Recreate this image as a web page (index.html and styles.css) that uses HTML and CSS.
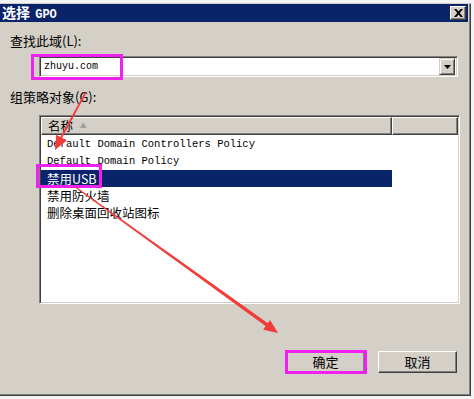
FILE: index.html
```html
<!DOCTYPE html>
<html lang="zh-CN">
<head>
    <meta charset="UTF-8">
    <title>选择 GPO</title>
    <link rel="stylesheet" href="styles.css">
</head>
<body>
    <div class="screen">
        <div class="window">
            <div class="titlebar">
                <span class="title">选择 <span class="title-latin">GPO</span></span>
                <button class="close">
                    <svg width="9" height="8" viewBox="0 0 9 8">
                        <path d="M0 0h2.4l2.1 2.5L6.6 0H9L5.7 4 9 8H6.6L4.5 5.5 2.4 8H0l3.3-4z" fill="#000"/>
                    </svg>
                </button>
            </div>

            <div class="body">
                <div class="label">查找此域(L):</div>
                <div class="combo">
                    <div class="combo-text">zhuyu.com</div>
                    <div class="combo-btn">
                        <svg width="7" height="4" viewBox="0 0 7 4"><path d="M0 0h7L3.5 4z" fill="#000"/></svg>
                    </div>
                </div>

                <div class="label label-gpo">组策略对象(G):</div>
                <div class="listview">
                    <div class="lv-header">
                        <div class="col col-name">名称 <span class="sort">▲</span></div>
                        <div class="col col-extra"></div>
                    </div>
                    <div class="lv-rows">
                        <div class="row latin">Default Domain Controllers Policy</div>
                        <div class="row latin">Default Domain Policy</div>
                        <div class="row selected">禁用USB</div>
                        <div class="row">禁用防火墙</div>
                        <div class="row">删除桌面回收站图标</div>
                    </div>
                </div>

                <div class="buttons">
                    <button class="btn">确定</button>
                    <button class="btn">取消</button>
                </div>
            </div>
        </div>

        <!-- annotations drawn on top of the screenshot -->
        <div class="mark mark-domain"></div>
        <div class="mark mark-usb"></div>
        <div class="mark mark-ok"></div>
        <svg class="arrows" width="474" height="399" viewBox="0 0 474 399">
            <polygon points="85,92 86.5,93 61.8,138.5 60,137.5" fill="#f33b3b"/>
            <polygon points="55,150 56.2,134.8 66.8,140.4" fill="#f33b3b"/>
            <polygon points="75,187.5 75.6,186.6 268.2,323.6 266.2,326.4" fill="#f33b3b"/>
            <polygon points="278,333 263.1,329.8 270.1,320" fill="#f33b3b"/>
        </svg>
    </div>
</body>
</html>
```

FILE: styles.css
```css
:root{
    --face:#d4d0c8;
    --navy:#0a246a;
    --shadow:#808080;
    --dark:#404040;
    --mark:#f020f0;
}

*{
    box-sizing: border-box;
    margin: 0;
}

body{
    background: #f4f4f4;
    font-family: "Noto Sans CJK SC", "Liberation Sans", sans-serif;
    font-size: 12px;
    color: #000;
}

.screen{
    position: relative;
    width: 474px;
    height: 399px;
    overflow: hidden;
}

.window{
    margin-top: 3px;
    width: 471px;
    height: 393px;
    background: var(--face);
    border-top: 1px solid var(--face);
    border-right: 1px solid var(--dark);
    border-bottom: 1px solid var(--dark);
    box-shadow: inset -1px -1px 0 var(--shadow);
}

.titlebar{
    height: 18px;
    margin-right: 2px;
    background: var(--navy);
    display: flex;
    align-items: center;
    justify-content: space-between;
    padding: 0 2px;
}
.title{
    color: #fff;
    font-weight: 700;
    font-size: 14px;
    line-height: 18px;
}
.title-latin{
    font-family: "Liberation Mono", monospace;
    font-size: 12px;
    margin-left: 2px;
}

button{
    appearance: none;
    outline: none;
    padding: 0;
    font-family: inherit;
    background: var(--face);
    border: 1px solid;
    border-color: #fff var(--dark) var(--dark) #fff;
    box-shadow: inset -1px -1px 0 var(--shadow);
}
.close{
    width: 16px;
    height: 14px;
    display: flex;
    align-items: center;
    justify-content: center;
}

.body{
    padding: 12px 12px 0 10px;
}

.label{
    font-size: 13px;
    line-height: 14px;
    height: 14px;
}
.label-gpo{
    margin-top: 13px;
}

.combo{
    margin: 8px 0 0 29px;
    width: 419px;
    height: 21px;
    display: flex;
    background: #fff;
    border: 1px solid;
    border-color: var(--shadow) #fff #fff var(--shadow);
    box-shadow: inset 1px 1px 0 var(--dark), inset -1px -1px 0 var(--face);
    padding: 2px;
}
.combo-text{
    flex: 1 1 0%;
    font-family: "Liberation Mono", monospace;
    font-size: 10px;
    line-height: 15px;
    padding-left: 2px;
}
.combo-btn{
    width: 16px;
    height: 17px;
    margin-top: -1px;
    background: var(--face);
    border: 1px solid;
    border-color: var(--face) var(--dark) var(--dark) var(--face);
    box-shadow: inset 1px 1px 0 #fff, inset -1px -1px 0 var(--shadow);
    display: flex;
    align-items: center;
    justify-content: center;
}

.listview{
    margin: 11px 0 0 29px;
    width: 421px;
    height: 189px;
    background: #fff;
    border: 1px solid;
    border-color: var(--shadow) #fff #fff var(--shadow);
    box-shadow: inset 1px 1px 0 var(--dark), inset -1px -1px 0 var(--face);
    padding: 1px;
}
.lv-header{
    display: flex;
    height: 18px;
}
.col{
    background: var(--face);
    border: 1px solid;
    border-color: #fff var(--dark) var(--dark) #fff;
    box-shadow: inset -1px -1px 0 var(--shadow);
    font-size: 12.5px;
    line-height: 15px;
    padding-left: 6px;
}
.col-name{
    width: 351px;
}
.col-extra{
    flex: 1 1 0%;
}
.sort{
    color: #a0a0a0;
    font-size: 7px;
    vertical-align: 3px;
    margin-left: 4px;
}

.lv-rows{
    padding-top: 1px;
}
.row{
    width: 351px;
    height: 17px;
    line-height: 17px;
    padding-left: 6px;
    font-size: 12.5px;
    white-space: nowrap;
    overflow: hidden;
}
.latin{
    font-family: "Liberation Mono", monospace;
    font-size: 10.5px;
}
.selected{
    background: var(--navy);
    color: #fff;
}

.buttons{
    display: flex;
    justify-content: flex-end;
    gap: 13px;
    margin-top: 47px;
    padding-right: 1px;
}
.btn{
    width: 79px;
    height: 22px;
    font-size: 13px;
    line-height: 18px;
}

.mark{
    position: absolute;
    border: 3px solid var(--mark);
}
.mark-domain{
    left: 31px;
    top: 54px;
    width: 92px;
    height: 26px;
}
.mark-usb{
    left: 36px;
    top: 164px;
    width: 66px;
    height: 24px;
}
.mark-ok{
    left: 285px;
    top: 350px;
    width: 82px;
    height: 24px;
}

.arrows{
    position: absolute;
    left: 0;
    top: 0;
}
```
